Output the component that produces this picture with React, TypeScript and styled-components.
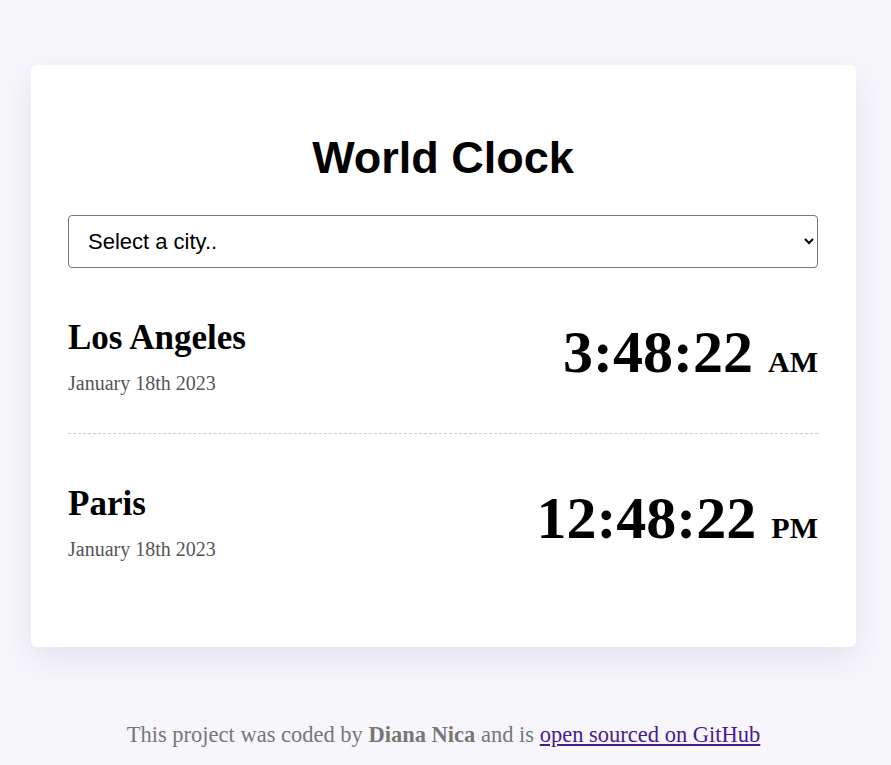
import styled, { createGlobalStyle } from "styled-components";

const GlobalStyle = createGlobalStyle`
  html, body {
    margin: 0;
    padding: 0;
    background: #f7f6fb;
  }
  body {
    font-family: "Liberation Serif", "Times New Roman", serif;
  }
`;

const Wrapper = styled.div`
  padding: 65px 0 0 31px;
  width: 825px;
`;

const Card = styled.div`
  background: #fff;
  border-radius: 6px;
  padding: 67px 38px 48px 37px;
  box-shadow: 0 12px 32px rgba(60, 50, 130, 0.1);
`;

const Title = styled.h1`
  margin: 0 0 31px;
  font-family: "Liberation Sans", Arial, sans-serif;
  font-size: 45px;
  line-height: 52px;
  font-weight: 700;
  text-align: center;
  color: #000;
`;

const CitySelect = styled.select`
  display: block;
  width: 100%;
  height: 53px;
  padding: 0 12px 0 15px;
  font-family: "Liberation Sans", Arial, sans-serif;
  font-size: 22px;
  color: #000;
  background: #fff;
  border: 1px solid #767676;
  border-radius: 4px;
`;

const CityRow = styled.div<{ last?: boolean }>`
  display: flex;
  justify-content: space-between;
  align-items: flex-start;
  padding: 49px 0 38px;
  border-bottom: ${(props) => (props.last ? "none" : "1px dashed #ccc")};
`;

const CityName = styled.h2`
  margin: 0;
  font-size: 35px;
  line-height: 42px;
  font-weight: 700;
  color: #000;
`;

const CityDate = styled.div`
  margin-top: 12px;
  font-size: 20px;
  line-height: 24px;
  color: #555;
`;

const Time = styled.div`
  margin-top: 6px;
  font-size: 60px;
  line-height: 59px;
  font-weight: 700;
  color: #000;
  white-space: nowrap;
`;

const Meridiem = styled.span`
  margin-left: 15px;
  font-size: 30px;
`;

const Footer = styled.footer`
  margin-top: 75px;
  text-align: center;
  font-size: 22.5px;
  line-height: 26px;
  color: #777;

  strong {
    font-weight: 700;
  }

  a {
    color: #4a1a90;
  }
`;

const cities = [
  { name: "Los Angeles", date: "January 18th 2023", time: "3:48:22", ampm: "AM" },
  { name: "Paris", date: "January 18th 2023", time: "12:48:22", ampm: "PM" },
];

function App() {
  return (
    <Wrapper>
      <GlobalStyle />
      <Card>
        <Title>World Clock</Title>
        <CitySelect defaultValue="">
          <option value="">Select a city..</option>
          <option value="tokyo">Tokyo</option>
          <option value="sydney">Sydney</option>
        </CitySelect>
        {cities.map((city, i) => (
          <CityRow key={city.name} last={i === cities.length - 1}>
            <div>
              <CityName>{city.name}</CityName>
              <CityDate>{city.date}</CityDate>
            </div>
            <Time>
              {city.time}
              <Meridiem>{city.ampm}</Meridiem>
            </Time>
          </CityRow>
        ))}
      </Card>
      <Footer>
        This project was coded by <strong>Diana Nica</strong> and is{" "}
        <a href="#">open sourced on GitHub</a>
      </Footer>
    </Wrapper>
  );
}

export default App;
